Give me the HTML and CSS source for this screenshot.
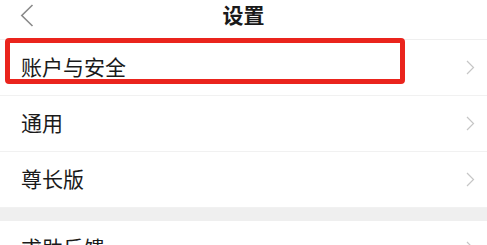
FILE: index.html
```html
<!DOCTYPE html>
<html lang="zh">
<head>
<meta charset="utf-8">
<link rel="stylesheet" href="styles.css">
</head>
<body>
<div class="page">
  <header class="nav">
    <span class="back">
      <svg width="14" height="23" viewBox="0 0 14 23"><path d="M12.5 1 L1.8 11.5 L12.5 22" fill="none" stroke="#8a8a8a" stroke-width="1.6"/></svg>
    </span>
    <h1 class="title">设置</h1>
    <span class="spacer"></span>
  </header>
  <ul class="list">
    <li class="row"><span>账户与安全</span><svg class="arrow" width="9" height="15" viewBox="0 0 9 15"><path d="M1 1 L7.5 7.5 L1 14" fill="none" stroke="#c6c6c6" stroke-width="1.2"/></svg></li>
    <li class="row"><span>通用</span><svg class="arrow" width="9" height="15" viewBox="0 0 9 15"><path d="M1 1 L7.5 7.5 L1 14" fill="none" stroke="#c6c6c6" stroke-width="1.2"/></svg></li>
    <li class="row"><span>尊长版</span><svg class="arrow" width="9" height="15" viewBox="0 0 9 15"><path d="M1 1 L7.5 7.5 L1 14" fill="none" stroke="#c6c6c6" stroke-width="1.2"/></svg></li>
  </ul>
  <div class="gap"></div>
  <ul class="list">
    <li class="row"><span>求助反馈</span><svg class="arrow" width="9" height="15" viewBox="0 0 9 15"><path d="M1 1 L7.5 7.5 L1 14" fill="none" stroke="#c6c6c6" stroke-width="1.2"/></svg></li>
  </ul>
  <div class="highlight"></div>
</div>
</body>
</html>
```
FILE: styles.css
```css
html, body {
  margin: 0;
  padding: 0;
  background: #fff;
}
.page {
  position: relative;
  width: 487px;
  height: 245px;
  overflow: hidden;
  font-family: "Noto Sans CJK SC", "Noto Sans", sans-serif;
  color: #1a1a1a;
}
.nav {
  height: 39px;
  border-bottom: 1px solid #efefef;
  display: grid;
  grid-template-columns: 60px 1fr 60px;
  align-items: center;
}
.back {
  display: flex;
  padding-left: 20px;
  padding-bottom: 8px;
}
.title {
  margin: 0;
  text-align: center;
  font-size: 21px;
  font-weight: 700;
  line-height: 1;
  padding-bottom: 11px;
}
.list {
  list-style: none;
  margin: 0;
  padding: 0;
}
.row {
  height: 55px;
  border-bottom: 1px solid #f1f1f1;
  display: flex;
  align-items: center;
  justify-content: space-between;
  padding: 0 12px 0 21px;
  font-size: 21px;
  line-height: 1;
}
.row span {
  padding-bottom: 2px;
}
.gap {
  height: 13px;
  background: #efefef;
}
.highlight {
  position: absolute;
  left: 5px;
  top: 38px;
  width: 390px;
  height: 36px;
  border: 5px solid #ea241d;
  border-radius: 4px;
}
```
